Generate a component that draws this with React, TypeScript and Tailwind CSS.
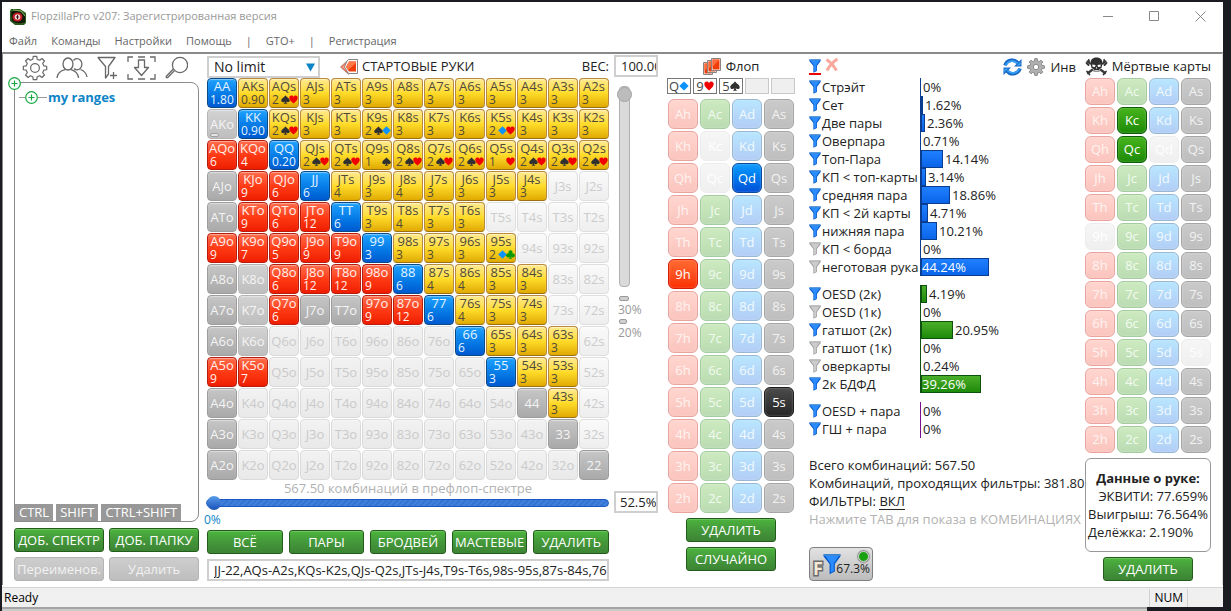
import React from "react";

type Suit = "h" | "c" | "d" | "s";
const RANKS = "AKQJT98765432".split("");
const SUITS: Suit[] = ["h", "c", "d", "s"];

// Each token: a combo count with optional suits, "g"/"m" for filtered-out hands, "." for unselected ones.
const HANDS = [
  "1.80 0.90 2sh 3 3 3 3 3 3 3 3 3 3",
  "w 0.90 2sh 3 3 2sd 3 3 3 2dh 3 3 3",
  "6 4 0.20 2sh 2sh 1s 2sh 2sh 2sh 1h 2sh 2sh 2sh",
  "g 9 6 6 4 3 4 3 3 3 3 . .",
  "g 9 6 12 6 3 4 3 3 . . . .",
  "9 7 5 9 9 3 3 3 3 2dc . . .",
  "g m 6 12 12 9 6 4 4 3 3 . .",
  "g m 6 g g 9 12 6 4 3 3 . .",
  "g m . . . . . . 6 3 3 3 .",
  "9 7 . . . . . . . 3 3 3 .",
  "g . . . . . . . . . g 3 .",
  "g . . . . . . . . . . g .",
  "g . . . . . . . . . . . g",
].map((row) => row.split(" "));

const CELL = {
  pair: "border-[#0c4a86] bg-linear-to-b from-[#1ea2ff] to-[#0059d0] text-[#e4f3ff]",
  suited: "border-[#b98a3c] border-b-[#9c7010] bg-linear-to-b from-[#ffe98a] via-[#ffdc28] to-[#e0aa00] text-[#4f4a3a]",
  off: "border-[#b81c0c] bg-linear-to-b from-[#ff6a48] via-[#ff3a14] to-[#ee1c00] text-[#fff0ea]",
  gray: "border-[#9c9c9c] bg-linear-to-b from-[#c6c6c6] to-[#a9a9a9] text-[#f4f4f4]",
  mid: "border-[#b4b4b4] bg-linear-to-b from-[#d2d2d2] to-[#bebebe] text-[#f4f4f4]",
  none: "border-[#dadada] bg-linear-to-b from-[#f2f2f2] to-[#e9e9e9] text-[#cacaca]",
  noneSuited: "border-[#dedede] bg-linear-to-b from-[#fafafa] to-[#eeeeee] text-[#cccccc]",
};

const SUIT_COLOR: Record<Suit, string> = { h: "#f00000", c: "#0a9a00", d: "#0a92ff", s: "#303030" };
const SUIT_PATH: Record<Suit, string> = {
  h: "M5 9.5C3 7.5.3 5.6.3 3.2.3 1.6 1.4.6 2.7.6 3.8.6 4.6 1.2 5 2.1 5.4 1.2 6.2.6 7.3.6 8.6.6 9.7 1.6 9.7 3.2 9.7 5.6 7 7.5 5 9.5Z",
  d: "M5 .4 9.7 5 5 9.6.3 5Z",
  s: "M5 .3C6 2.4 9.7 3.8 9.7 6.2 9.7 8.3 7 8.7 5.7 7.3 5.8 8.4 6.2 9.1 7.2 9.7H2.8C3.8 9.1 4.2 8.4 4.3 7.3 3 8.7.3 8.3.3 6.2.3 3.8 4 2.4 5 .3Z",
  c: "M5 .3A2.2 2.2 0 0 1 6.8 3.8 2.3 2.3 0 1 1 5.6 7.2Q5.8 9 7 9.7H3Q4.2 9 4.4 7.2A2.3 2.3 0 1 1 3.2 3.8 2.2 2.2 0 0 1 5 .3Z",
};

function SuitIcon({ suit, className = "h-[9px] w-[9px]" }: { suit: Suit; className?: string }) {
  return (
    <svg viewBox="0 0 10 10" className={className} fill={SUIT_COLOR[suit]}>
      <path d={SUIT_PATH[suit]} />
    </svg>
  );
}

function HandCell({ row, col }: { row: number; col: number }) {
  const token = HANDS[row][col];
  const name =
    row === col ? RANKS[row] + RANKS[row] : col > row ? `${RANKS[row]}${RANKS[col]}s` : `${RANKS[col]}${RANKS[row]}o`;
  const match = /^([\d.]*\d)([hcds]*)$/.exec(token);
  const base = "flex h-[30px] min-w-0 flex-col overflow-hidden rounded-[4px] border text-[13px] leading-[14px] shadow-[inset_0_1px_1px_rgba(255,255,255,0.45)]";
  if (!match) {
    const tone = token === "g" ? CELL.gray : token === "." ? (col > row ? CELL.noneSuited : CELL.none) : CELL.mid;
    return (
      <button className={`${base} ${tone} relative items-center justify-center`}>
        <span>{name}</span>
        {token === "w" && (
          <span className="absolute bottom-px left-[2px] h-[4px] w-[9px] rounded-[2px] border border-[#a0a0a0] bg-[#e4e4e4]" />
        )}
      </button>
    );
  }
  const [, count, suits] = match;
  const tone = row === col ? CELL.pair : col > row ? CELL.suited : CELL.off;
  return (
    <button className={`${base} ${tone}`}>
      <span className="block w-full text-center">{name}</span>
      <span className="flex w-full items-center justify-between pl-[2px] text-[12px] leading-[13px]">
        <span>{count}</span>
        <span className="flex -space-x-px">
          {suits.split("").map((s) => (
            <SuitIcon key={s} suit={s as Suit} />
          ))}
        </span>
      </span>
    </button>
  );
}

const FADED: Record<Suit, string> = {
  h: "border-[#eba3a0] from-[#ffd6cf] to-[#fac4bd] text-[#fff3f1]",
  c: "border-[#a5cba0] from-[#cdeac0] to-[#badcb2] text-[#f2fbf0]",
  d: "border-[#9ab8d2] from-[#b8e6ff] to-[#b2cdf5] text-[#f2faff]",
  s: "border-[#a6a6a6] from-[#cacaca] to-[#bebebe] text-[#f2f2f2]",
};
const ACTIVE: Record<Suit, string> = {
  h: "border-[#d81c08] from-[#ff6a30] to-[#fb2c00] text-white",
  c: "border-[#0d5c06] from-[#46b41c] to-[#1b8a06] text-white",
  d: "border-[#0c4a9a] from-[#149cff] to-[#0050d8] text-white",
  s: "border-[#1c1c1c] from-[#4c4c4c] to-[#262626] text-white",
};

function CardGrid({ active, blocked, tall }: { active: string[]; blocked: string[]; tall?: boolean }) {
  return (
    <div className="grid grid-cols-4 gap-[2px]">
      {RANKS.flatMap((r) =>
        SUITS.map((s) => {
          const id = r + s;
          const tone = active.includes(id)
            ? ACTIVE[s]
            : blocked.includes(id)
              ? "border-[#ececec] from-[#f6f6f6] to-[#efefef] text-white"
              : FADED[s];
          return (
            <button
              key={id}
              className={`${tall ? "h-[30px]" : "h-[27px]"} rounded-[6px] border bg-linear-to-b text-[13px] leading-none shadow-[inset_0_0_2px_rgba(255,255,255,0.4)] ${tone}`}
            >
              {id}
            </button>
          );
        }),
      )}
    </div>
  );
}

function Funnel({ off, className = "h-[14px] w-[12px]" }: { off?: boolean; className?: string }) {
  const [light, dark] = off ? ["#cccccc", "#9c9c9c"] : ["#2a8cff", "#0056c8"];
  return (
    <svg viewBox="0 0 12 14" className={className}>
      <path d="M.4.5H11.6V2L7.9 7V12L4.4 13.8V7L.4 2Z" fill={dark} />
      <path d="M1 1H11L7.2 6.6V11.6L5.1 12.8V6.6Z" fill={light} />
      <path d="M.4.5H11.6V1.7H.4Z" fill={off ? "#b4b4b4" : "#3d88d8"} />
    </svg>
  );
}

function gearPath(teeth: number, c: number, inner: number, outer: number) {
  const pts: string[] = [];
  for (let i = 0; i < teeth; i++) {
    const a = (i * 2 * Math.PI) / teeth - Math.PI / 2;
    const step = Math.PI / teeth;
    [
      [-0.62, inner],
      [-0.38, outer],
      [0.38, outer],
      [0.62, inner],
    ].forEach(([k, r]) => pts.push(`${(c + r * Math.cos(a + k * step)).toFixed(2)} ${(c + r * Math.sin(a + k * step)).toFixed(2)}`));
  }
  return `M${pts.join("L")}Z`;
}

function PlusNode({ className = "" }: { className?: string }) {
  return (
    <svg viewBox="0 0 13 13" className={`h-[13px] w-[13px] ${className}`} fill="#fff" stroke="#18a840">
      <circle cx="6.5" cy="6.5" r="5.8" strokeWidth="1.2" />
      <path d="M3.5 6.5H9.5M6.5 3.5V9.5" strokeWidth="1.2" />
    </svg>
  );
}

function GreenButton({ children, className = "" }: { children: React.ReactNode; className?: string }) {
  return (
    <button
      className={`h-6 rounded-[3px] border border-[#235c1a] bg-linear-to-b from-[#4cb43e] via-[#44983a] to-[#3c8434] text-center text-[13px] leading-none whitespace-nowrap text-white shadow-[inset_0_1px_0_#6cc65e] ${className}`}
    >
      {children}
    </button>
  );
}

function Toolbar() {
  const tool = "flex items-center justify-center";
  return (
    <div className="flex h-[26px] items-center gap-[8px] pl-[8px]">
      <button className={tool} aria-label="Настройки спектров">
        <svg viewBox="0 0 26 26" className="h-[26px] w-[26px]" fill="none" stroke="#686868" strokeWidth="1.2" strokeLinejoin="round">
          <path d={gearPath(8, 13, 9, 11.8)} />
          <circle cx="13" cy="13" r="4.4" />
        </svg>
      </button>
      <button className={tool} aria-label="Игроки">
        <svg viewBox="0 0 32 24" className="h-[24px] w-[32px]" fill="none" stroke="#686868" strokeWidth="1.3">
          <ellipse cx="12" cy="8" rx="5" ry="6" />
          <path d="M1 22C1.5 17 4 14.8 9 13.6M15 13.6C19.5 14.8 22 17 22.6 22" />
          <path d="M17.5 4.5A4.8 5.6 0 1 1 18 12.5M24.5 13.5C28.5 15 30.5 17.5 31 21" />
        </svg>
      </button>
      <button className={tool} aria-label="Добавить фильтр">
        <svg viewBox="0 0 22 24" className="h-[24px] w-[22px]" fill="none" stroke="#686868" strokeWidth="1.3" strokeLinejoin="round">
          <path d="M2 1.5H19L12.5 10.5V18L9.5 22V10.5Z" />
          <path d="M14 19.5H21M17.5 16V23" />
        </svg>
      </button>
      <button className={tool} aria-label="Импорт">
        <svg viewBox="0 0 30 24" className="h-[24px] w-[30px]" fill="none" stroke="#686868" strokeWidth="1.3">
          <path d="M2 6V1H7M12 1H19M24 1H29V6M2 18V23H7M12 23H19M24 23H29V18" />
          <path d="M12.5 4H18.5V11.5H22.5L15.5 19.5 8.5 11.5H12.5Z" strokeLinejoin="round" />
        </svg>
      </button>
      <button className={tool} aria-label="Поиск">
        <svg viewBox="0 0 24 24" className="h-[24px] w-[24px]" fill="none" stroke="#686868" strokeWidth="1.3">
          <circle cx="16" cy="9" r="7.6" />
          <path d="M10.5 14.5 4 21.2C2.8 22.6 1.4 21.2 2.6 20L9.3 13" />
        </svg>
      </button>
    </div>
  );
}

function RangesPanel() {
  return (
    <section className="flex w-[185px] shrink-0 flex-col">
      <Toolbar />
      <div className="relative mt-px flex h-[440px] flex-col justify-between rounded-tr-[8px] rounded-br-[8px] border border-[#8c8c8c]">
        <PlusNode className="absolute -top-[6px] -left-[7px]" />
        <button className="flex items-center pt-[5px] pl-[4px] text-[13px] leading-[18px] font-bold text-[#0d84c6]">
          <span className="h-px w-[6px] bg-[#999]" />
          <PlusNode />
          <span className="mr-px h-px w-[9px] bg-[#999]" />
          my ranges
        </button>
        <div className="flex gap-[3px] text-[13px] leading-[17px] text-white">
          <span className="bg-[#989898] px-[4px]">CTRL</span>
          <span className="bg-[#989898] px-[4px]">SHIFT</span>
          <span className="bg-[#989898] px-[4px]">CTRL+SHIFT</span>
        </div>
      </div>
      <div className="mt-[6px] grid grid-cols-2 gap-[5px]">
        <GreenButton>ДОБ. СПЕКТР</GreenButton>
        <GreenButton>ДОБ. ПАПКУ</GreenButton>
        {["Переименов.", "Удалить"].map((t) => (
          <button key={t} disabled className="h-6 rounded-[3px] border border-[#b4b4b4] bg-linear-to-b from-[#cecece] to-[#bebebe] text-[13px] leading-none text-[#f2f2f2]">
            {t}
          </button>
        ))}
      </div>
    </section>
  );
}

function StartingHands() {
  const box = "h-[22px] w-full min-w-0 border-2 border-[#cfcfcf] bg-white text-[13px] leading-none text-[#222]";
  return (
    <section className="ml-[8px] grid shrink-0 grid-cols-[402px_44px] content-start gap-x-[5px]">
      <div className="flex h-[23px] items-center">
        <div className="relative w-[113px]">
          <select aria-label="Лимит" className={`${box} block appearance-none pl-[5px] text-[14px]`}>
            <option>No limit</option>
          </select>
          <svg viewBox="0 0 10 9" className="pointer-events-none absolute top-[7px] right-[5px] h-[9px] w-[9px]" fill="#0d84c6">
            <path d="M0 0H10L5 9Z" />
          </svg>
        </div>
        <h2 className="ml-5 flex items-center gap-[4px] text-[13px] text-[#222]">
          <svg viewBox="0 0 18 16" className="h-[16px] w-[18px]">
            <path d="M.5 8 8.5.5V15.5Z" fill="#e83010" stroke="#b9a49c" />
            <path d="M2.500 8 9 2V14Z" fill="#ff6a30" stroke="#fff" strokeWidth=".8" />
            <path d="M7 2 8.500 .500H17.500V14.500H8.500L4.500 8Z" fill="#fff" stroke="#8a8480" />
            <path d="M9 2.500H16V12.500H9L6 8Z" fill="#f03c08" />
            <path d="M9 2.500H16V4L8 11 6 8Z" fill="#ff7a48" />
          </svg>
          СТАРТОВЫЕ РУКИ
        </h2>
        <label htmlFor="weight" className="ml-auto text-[13px] text-[#222]">
          ВЕС:
        </label>
      </div>
      <input id="weight" defaultValue="100.00" className={`${box} pl-[5px]`} />
      <div className="grid grid-cols-13 gap-px">
        {RANKS.flatMap((_, r) => RANKS.map((__, c) => <HandCell key={`${r}-${c}`} row={r} col={c} />))}
      </div>
      <div className="flex flex-col items-start pt-[8px] pl-[3px] text-[12px] leading-[12px] text-[#999]">
        <input
          type="range"
          aria-label="Вес"
          defaultValue={0}
          className="mb-[9px] h-[201px] w-[15px] appearance-none bg-transparent [writing-mode:vertical-lr] [&::-webkit-slider-runnable-track]:w-[11px] [&::-webkit-slider-runnable-track]:rounded-[4px] [&::-webkit-slider-runnable-track]:border [&::-webkit-slider-runnable-track]:border-[#b0b0b0] [&::-webkit-slider-runnable-track]:bg-[#dadada] [&::-webkit-slider-thumb]:-ml-[3px] [&::-webkit-slider-thumb]:h-[15px] [&::-webkit-slider-thumb]:w-[15px] [&::-webkit-slider-thumb]:appearance-none [&::-webkit-slider-thumb]:rounded-full [&::-webkit-slider-thumb]:border [&::-webkit-slider-thumb]:border-[#a4a4a4] [&::-webkit-slider-thumb]:bg-[#bcbcbc]"
        />
        <span className="ml-[2px] h-[5px] w-[10px] rounded-[2px] border border-[#999] bg-[#d0d0d0]" />
        <span className="mt-[3px] mb-[3px] ml-px">30%</span>
        <span className="ml-[2px] h-[5px] w-[8px] rounded-[2px] border border-[#999] bg-[#d0d0d0]" />
        <span className="mt-[3px] ml-px">20%</span>
      </div>
      <div className="flex flex-col">
        <p className="pt-px text-center text-[13px] leading-[15px] text-[#b2b2b2]">567.50 комбинаций в префлоп-спектре</p>
        <input
          type="range"
          aria-label="Процент рук"
          defaultValue={0}
          className="-ml-px h-[14px] w-[403px] appearance-none bg-transparent [&::-webkit-slider-runnable-track]:h-[8px] [&::-webkit-slider-runnable-track]:rounded-[4px] [&::-webkit-slider-runnable-track]:border [&::-webkit-slider-runnable-track]:border-[#1a5ac0] [&::-webkit-slider-runnable-track]:bg-[repeating-linear-gradient(135deg,#4080dc_0_2px,#3474d2_2px_4px)] [&::-webkit-slider-thumb]:-mt-[4px] [&::-webkit-slider-thumb]:h-[14px] [&::-webkit-slider-thumb]:w-[14px] [&::-webkit-slider-thumb]:appearance-none [&::-webkit-slider-thumb]:rounded-full [&::-webkit-slider-thumb]:bg-linear-to-b [&::-webkit-slider-thumb]:from-[#5a9cec] [&::-webkit-slider-thumb]:to-[#1a52b8]"
        />
        <span className="-ml-[3px] text-[12px] leading-[20px] text-[#0d84c6]">0%</span>
      </div>
      <input aria-label="Доля рук" defaultValue="52.5%" className={`${box} mt-[11px] pl-[4px]`} />
      <div className="flex flex-col gap-[5px]">
        <div className="grid grid-cols-5 gap-[6px]">
          {["ВСЁ", "ПАРЫ", "БРОДВЕЙ", "МАСТЕВЫЕ", "УДАЛИТЬ"].map((t) => (
            <GreenButton key={t}>{t}</GreenButton>
          ))}
        </div>
        <input
          aria-label="Спектр"
          defaultValue="JJ-22,AQs-A2s,KQs-K2s,QJs-Q2s,JTs-J4s,T9s-T6s,98s-95s,87s-84s,76s-74s"
          className={`${box} pl-[5px]`}
        />
      </div>
    </section>
  );
}

function FlopPanel() {
  const picked: [string, Suit][] = [["Q", "d"], ["9", "h"], ["5", "s"]];
  return (
    <section className="ml-[9px] flex w-[128px] shrink-0 flex-col">
      <h2 className="flex h-[23px] items-center justify-center gap-[4px] text-[13px] text-[#222]">
        <svg viewBox="0 0 19 17" className="h-[17px] w-[19px]" stroke="#8a8480">
          {[0, 4, 8].map((x, i) => (
            <g key={x} transform={`translate(${x} ${4 - i * 2})`}>
              <path d="M.5.5H9.5V12.5H.5Z" fill="#fff" />
              <path d="M1.500 1.500H8.500V11.500H1.500Z" fill="#f03c08" stroke="none" />
              <path d="M1.500 1.500H8.500L1.500 9Z" fill="#ff6a38" stroke="none" />
            </g>
          ))}
        </svg>
        Флоп
      </h2>
      <div className="grid h-[16px] grid-cols-5 gap-[2px] text-[13px] leading-none text-[#444]">
        {picked.map(([r, s]) => (
          <span key={r} className="flex items-center justify-center border border-[#777] bg-white">
            {r}
            <SuitIcon suit={s} className="h-[10px] w-[10px]" />
          </span>
        ))}
        <span className="border border-[#c8c8c8] bg-[#efefef]" />
        <span className="border border-[#c8c8c8] bg-[#efefef]" />
      </div>
      <div className="mx-px mt-[5px]">
        <CardGrid tall active={["Qd", "9h", "5s"]} blocked={["Kc", "Qc"]} />
      </div>
      <div className="mx-auto mt-[5px] flex w-[90px] flex-col gap-[5px]">
        <GreenButton>УДАЛИТЬ</GreenButton>
        <GreenButton>СЛУЧАЙНО</GreenButton>
      </div>
    </section>
  );
}

type Stat = [label: string, value: number, enabled: boolean];
const GROUPS: { bar: string; axis: string; rows: Stat[] }[] = [
  {
    bar: "border-[#0a3c90] from-[#1f80ff] to-[#0a64e8]",
    axis: "border-[#0a3c90]",
    rows: [
      ["Стрэйт", 0, true],
      ["Сет", 1.62, true],
      ["Две пары", 2.36, true],
      ["Оверпара", 0.71, true],
      ["Топ-Пара", 14.14, true],
      ["КП < топ-карты", 3.14, true],
      ["средняя пара", 18.86, true],
      ["КП < 2й карты", 4.71, true],
      ["нижняя пара", 10.21, true],
      ["КП < борда", 0, false],
      ["неготовая рука", 44.24, false],
    ],
  },
  {
    bar: "border-[#0d5010] from-[#4aae28] to-[#1c8a08]",
    axis: "border-[#0d5010]",
    rows: [
      ["OESD (2к)", 4.19, true],
      ["OESD (1к)", 0, false],
      ["гатшот (2к)", 20.95, true],
      ["гатшот (1к)", 0, false],
      ["оверкарты", 0.24, false],
      ["2к БДФД", 39.26, true],
    ],
  },
  {
    bar: "border-[#7a1090] from-[#b040c8] to-[#8a1aa0]",
    axis: "border-[#7a1090]",
    rows: [
      ["OESD + пара", 0, true],
      ["ГШ + пара", 0, true],
    ],
  },
];

function StatRow({ stat, bar, axis }: { stat: Stat; bar: string; axis: string }) {
  const [label, value, enabled] = stat;
  const text = value === 0 ? "0%" : `${value.toFixed(2)}%`;
  const width = Math.round(value * 1.53);
  const inside = width > 50;
  return (
    <li className="flex h-[18px] items-center">
      <button className="flex w-[111px] items-center gap-px text-left whitespace-nowrap">
        <Funnel off={!enabled} />
        {label}
      </button>
      <div className={`flex h-full items-center border-l ${axis}`}>
        {width > 1 && (
          <div className={`flex h-full items-center border bg-linear-to-b text-white ${bar}`} style={{ width }}>
            {inside && <span>{text}</span>}
          </div>
        )}
        {!inside && <span className="pl-[2px]">{text}</span>}
      </div>
    </li>
  );
}

function StatsPanel() {
  return (
    <section className="ml-[14px] min-w-0 flex-1 text-[13px] leading-[18px] text-[#222]">
      <div className="flex h-[23px] items-center justify-between pr-[9px]">
        <div className="flex items-center gap-[4px]">
          <button aria-label="Фильтр" className="flex flex-col">
            <Funnel />
            <span className="h-[2px] w-[12px] bg-[#f00000]" />
          </button>
          <button aria-label="Сбросить фильтр">
            <svg viewBox="0 0 14 14" className="mb-[3px] h-[14px] w-[14px]" fill="none" stroke="#f8a89c" strokeWidth="3">
              <path d="M1.5 1.5Q7 5 11.5 12.5M12.5 1Q6 5 2 12.5" />
            </svg>
          </button>
        </div>
        <div className="flex items-center gap-[5px]">
          <button aria-label="Обновить">
            <svg viewBox="0 0 19 18" className="h-[18px] w-[19px]" fill="none">
              <path d="M2 7.5C4 1.5 11.5.5 15 5.2M17 10.5C15 16.5 7.500 17.500 4 12.800" stroke="#1666c4" strokeWidth="3.600" />
              <path d="M18.500 1V8.500H11ZM.500 17V9.500H8Z" fill="#1666c4" />
              <path d="M2.600 7.500C5 2.500 11 1.500 14.500 5.500M16.400 10.500C14 15.500 8 16.500 4.500 12.500" stroke="#38a0f4" strokeWidth="1.800" />
              <path d="M17.600 3.500V7.600H13.500ZM1.400 14.500V10.400H5.500Z" fill="#38a0f4" />
            </svg>
          </button>
          <button aria-label="Настройки">
            <svg viewBox="0 0 20 20" className="h-[18px] w-[18px]" fill="#b0b0b0" stroke="#808080" strokeLinejoin="round">
              <path d={gearPath(8, 10, 7, 9.4)} />
              <circle cx="10" cy="10" r="3" fill="#fff" />
            </svg>
          </button>
          <button>Инв</button>
        </div>
      </div>
      <div className="flex flex-col gap-[9px]">
        {GROUPS.map((g) => (
          <ul key={g.axis}>
            {g.rows.map((r) => (
              <StatRow key={r[0]} stat={r} bar={g.bar} axis={g.axis} />
            ))}
          </ul>
        ))}
      </div>
      <div className="mt-[18px] whitespace-nowrap">
        <p>Всего комбинаций: 567.50</p>
        <p>Комбинаций, проходящих фильтры: 381.80</p>
        <p>
          ФИЛЬТРЫ: <button className="border-b border-[#222] leading-[15px]">ВКЛ</button>
        </p>
        <p className="text-[#b2b2b2]">Нажмите TAB для показа в КОМБИНАЦИЯХ</p>
      </div>
      <button className="relative mt-[19px] block h-[34px] w-[64px] rounded-[4px] border border-[#808080] bg-linear-to-b from-[#e2e2e2] to-[#bcbcbc]">
        <span className="absolute bottom-[3px] left-[3px] text-[18px] leading-[18px] font-bold text-[#f6ead8] [paint-order:stroke_fill] [-webkit-text-stroke:3px_#6c6c6c]">F</span>
        <Funnel className="absolute top-[5px] left-[13px] h-[22px] w-[18px]" />
        <span className="absolute right-[2px] bottom-[2px] text-[12px] leading-[18px]">67.3%</span>
        <span className="absolute top-[3px] right-[3px] h-[11px] w-[11px] rounded-full border border-[#d8d8d8] bg-[#1aa010] shadow-[0_0_1px_1px_#909090]" />
      </button>
    </section>
  );
}

function Skull() {
  return (
    <svg viewBox="0 0 23 19" className="h-[19px] w-[23px]">
      <g stroke="#383838" strokeWidth="2.200" strokeLinecap="round">
        <path d="M2.500 4.500 5 6.500M20.500 4.500 18 6.500M3 16 7 13M20 16 16 13" />
        <path d="M1.500 6 3.500 8M3.800 2.800 4 5M21.500 6 19.500 8M19.200 2.800 19 5M2 14.500 4.500 17.500M21 14.500 18.500 17.500" strokeWidth="1.800" />
      </g>
      <path d="M11.500 .5C7.500 .5 5.300 3 5.500 6.500 5.600 8.500 6.300 9 6.500 11L8.500 12V14.500H14.500V12L16.500 11C16.700 9 17.400 8.500 17.500 6.500 17.700 3 15.500 .5 11.500 .5Z" fill="#303030" />
      <path d="M7.300 7.500 10.500 8 10 10 7.500 9.700ZM15.700 7.500 12.500 8 13 10 15.500 9.700ZM11.500 9.800 12.300 11.500H10.700ZM9.300 13H13.700V13.700H9.300Z" fill="#fff" />
    </svg>
  );
}

function DeadCards() {
  return (
    <section className="mr-[11px] flex w-[126px] shrink-0 flex-col text-[13px] text-[#222]">
      <h2 className="flex h-[23px] items-center justify-between whitespace-nowrap">
        <Skull />
        Мёртвые карты
      </h2>
      <CardGrid active={["Kc", "Qc"]} blocked={["Qd", "9h", "5s"]} />
      <div className="mt-[5px] flex h-[94px] flex-col items-center justify-center rounded-[6px] border border-[#999] leading-[18px] whitespace-nowrap">
        <p className="font-bold">Данные о руке:</p>
        <div>
          <p className="text-right">ЭКВИТИ: 77.659%</p>
          <p>Выигрыш: 76.564%</p>
          <p>Делёжка: 2.190%</p>
        </div>
      </div>
      <GreenButton className="mx-auto mt-[5px] w-[90px]">УДАЛИТЬ</GreenButton>
    </section>
  );
}

function TitleBar() {
  return (
    <header className="flex h-[29px] items-center justify-between pr-[17px] pl-[8px] text-[11px] text-[#999]">
      <div className="flex items-center gap-[5px]">
        <svg viewBox="0 0 16 16" className="h-[16px] w-[16px]">
          <path d="M1 0H10L16 4V14L14 16H5L0 12V2Z" fill="#2c5a1c" />
          <path d="M1 3Q8-1 15 7L15 13Q8 16 2 12Z" fill="#101808" />
          <ellipse cx="7.500" cy="8" rx="5" ry="4.500" fill="#c01c24" />
          <circle cx="7.500" cy="8" r="2.800" fill="#f0d8d8" />
          <path d="M7.500 5.500 8.600 8 7.500 10.500 6.400 8Z" fill="#300" />
          <path d="M3 1 11 2 15 7" stroke="#7ca85c" fill="none" />
        </svg>
        <h1>FlopzillaPro v207: Зарегистрированная версия</h1>
      </div>
      <div className="flex items-center gap-[35px]">
        <button aria-label="Свернуть"><svg viewBox="0 0 11 11" className="h-[11px] w-[11px]" stroke="#888"><path d="M0 5.500H10" /></svg></button>
        <button aria-label="Развернуть"><svg viewBox="0 0 11 11" className="h-[11px] w-[11px]" fill="none" stroke="#888"><path d="M.5.5H9.500V9.500H.5Z" /></svg></button>
        <button aria-label="Закрыть"><svg viewBox="0 0 11 11" className="h-[11px] w-[11px]" stroke="#888"><path d="M.5.5 10.500 10.500M10.500.5.5 10.500" /></svg></button>
      </div>
    </header>
  );
}

export default function App() {
  return (
    <div className="flex min-h-screen flex-col bg-[#1b1c22] pt-[2px] pr-[8px] pl-[2px] font-['Open_Sans','Noto_Sans',sans-serif]">
      <div className="flex flex-1 flex-col bg-white">
        <TitleBar />
        <nav className="flex h-[21px] items-center gap-[14px] pl-[7px] text-[11px] text-[#666]">
          <button>Файл</button>
          <button>Команды</button>
          <button>Настройки</button>
          <button>Помощь</button>
          <span>|</span>
          <button>GTO+</button>
          <span>|</span>
          <button>Регистрация</button>
        </nav>
        <main className="flex flex-1 border-t-2 border-r border-l border-t-[#8a8a8a] border-r-[#dcdcdc] border-l-[#8a8a8a] pt-px pl-[11px]">
          <RangesPanel />
          <StartingHands />
          <FlopPanel />
          <StatsPanel />
          <DeadCards />
        </main>
        <footer className="mt-[2px] flex h-[20px] items-center justify-between border-t border-[#d4d4d4] bg-[#f0f0f0] pt-px pr-[35px] pl-[2px] text-[12px] text-black">
          <span>Ready</span>
          <span className="border-x border-[#d0d0d0] px-[4px]">NUM</span>
        </footer>
      </div>
      <div className="mr-[76px] h-[4px] border-t-2 border-[#a4a4a4] bg-[#cacaca]" />
    </div>
  );
}
